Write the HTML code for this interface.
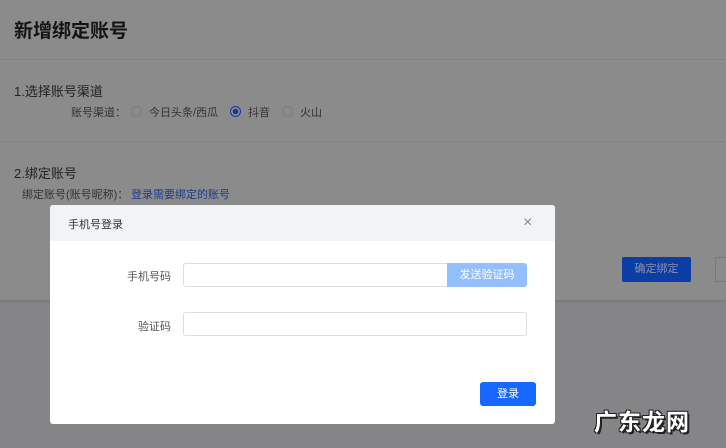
<!DOCTYPE html>
<html><head><meta charset="utf-8"><style>
*{margin:0;padding:0;box-sizing:border-box}
body{width:726px;height:448px;overflow:hidden;position:relative;background:#858588;font-family:"Liberation Sans","Noto Sans CJK SC",sans-serif}
.top{position:absolute;left:0;top:0;width:726px;height:300px;background:#8b8b8b;box-shadow:0 1px 3px rgba(0,0,0,.15)}
.t{position:absolute;white-space:nowrap}
.hr{position:absolute;left:0;width:726px;height:1px;background:#828282}
.rad{position:absolute;width:11px;height:11px;border:1px solid #7e7e7e;border-radius:50%}
.dlg{position:absolute;left:50px;top:205px;width:505px;height:219px;background:#fff;border-radius:3px;overflow:hidden}
.hd{height:36px;background:#f2f3f5}
.inp{position:absolute;border:1px solid #dcdee2;border-radius:3px;background:#fff}
</style></head><body>
<div class="top">
<div class="t" style="left:14px;top:16px;font-size:19px;font-weight:bold;color:#141414">新增绑定账号</div>
<div class="hr" style="top:59px"></div>
<div class="t" style="left:14px;top:81px;font-size:13px;color:#222">1.选择账号渠道</div>
<div class="t" style="left:71px;top:104px;font-size:11px;color:#333">账号渠道：</div>
<div class="rad" style="left:131px;top:106px"></div>
<div class="t" style="left:149px;top:104px;font-size:11px;color:#333">今日头条/西瓜</div>
<div class="rad" style="left:230px;top:106px;border-color:#0a3ea5;background:radial-gradient(circle,#0a3ea5 2.5px,transparent 3px)"></div>
<div class="t" style="left:248px;top:104px;font-size:11px;color:#333">抖音</div>
<div class="rad" style="left:282px;top:106px"></div>
<div class="t" style="left:300px;top:104px;font-size:11px;color:#333">火山</div>
<div class="hr" style="top:141px"></div>
<div class="t" style="left:14px;top:163px;font-size:13px;color:#222">2.绑定账号</div>
<div class="t" style="left:22px;top:186px;font-size:11px;color:#333">绑定账号(账号昵称)：</div>
<div class="t" style="left:131px;top:186px;font-size:11px;color:#1c3c8c">登录需要绑定的账号</div>
<div class="t" style="left:622px;top:257px;width:69px;height:25px;background:#0a3ea5;border-radius:2px;color:#8f8fae;font-size:11px;text-align:center;line-height:25px">确定绑定</div>
<div class="t" style="left:715px;top:257px;width:20px;height:25px;border:1px solid #7a7a7a;border-radius:2px"></div>
</div>
<div class="t" style="left:594px;top:403px;font-size:23px;letter-spacing:1px;font-weight:bold;color:#fff;text-shadow:-1px -1px 0 #222,1px -1px 0 #222,-1px 1px 0 #222,1px 1px 0 #222,2px 2px 0 #222">广东龙网</div>
<div class="dlg">
<div class="hd"></div>
<div class="t" style="left:18px;top:11px;font-size:11px;color:#333">手机号登录</div>
<div class="t" style="left:473px;top:9px;font-size:16px;color:#888">×</div>
<div class="t" style="left:77px;top:63px;font-size:11px;color:#555">手机号码</div>
<div class="inp" style="left:133px;top:58px;width:344px;height:24px"></div>
<div class="t" style="left:397px;top:58px;width:80px;height:24px;background:#94bfff;border-radius:0 3px 3px 0;color:#fff;font-size:11px;text-align:center;line-height:24px">发送验证码</div>
<div class="t" style="left:88px;top:113px;font-size:11px;color:#555">验证码</div>
<div class="inp" style="left:133px;top:107px;width:344px;height:24px"></div>
<div class="t" style="left:430px;top:177px;width:56px;height:24px;background:#1668ff;border-radius:3px;color:#fff;font-size:11px;text-align:center;line-height:24px">登录</div>
</div>
</body></html>
